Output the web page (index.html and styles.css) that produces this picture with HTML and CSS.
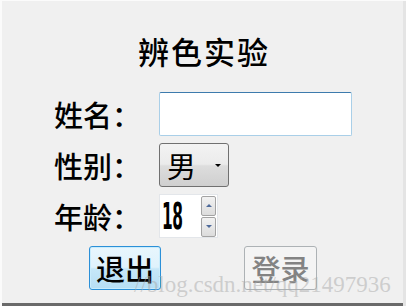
FILE: index.html
```html
<!DOCTYPE html>
<html lang="zh-CN">
<head>
<meta charset="utf-8">
<title>辨色实验</title>
<link rel="stylesheet" href="styles.css">
</head>
<body>
<div class="window">
  <h1 class="title">辨色实验</h1>
  <div class="row">
    <span class="label">姓名：</span>
    <div class="textbox"></div>
  </div>
  <div class="row">
    <span class="label">性别：</span>
    <div class="combo"><span class="combo-text">男</span><span class="combo-arrow"></span></div>
  </div>
  <div class="row">
    <span class="label">年龄：</span>
    <div class="spin">
      <span class="spin-value">18</span>
      <div class="spin-buttons">
        <div class="spin-btn"><span class="tri-up"></span></div>
        <div class="spin-btn"><span class="tri-down"></span></div>
      </div>
    </div>
  </div>
  <div class="buttons">
    <div class="btn btn-exit">退出</div>
    <div class="btn btn-login">登录</div>
  </div>
  <div class="watermark">//blog.csdn.net/qq21497936</div>
</div>
</body>
</html>
```
FILE: styles.css
```css
html, body {
  margin: 0;
  padding: 0;
  background: #f0f0f0;
}
.window {
  position: relative;
  width: 406px;
  height: 306px;
  box-sizing: border-box;
  background: #f0f0f0;
  padding-top: 31px;
  display: flex;
  flex-direction: column;
  font-family: "Noto Sans CJK SC", sans-serif;
  color: #000;
  box-shadow: inset 2px 0 0 #fbfbfb, inset 0 1px 0 #fbfbfb, inset -3px 0 0 #e4e4e4, inset 0 -3px 0 #6a6a6a;
  overflow: hidden;
}
.title {
  margin: 0;
  font-size: 31px;
  font-weight: 500;
  line-height: 40px;
  height: 40px;
  text-align: center;
  letter-spacing: 2px;
  padding-left: 2px;
}
.row {
  display: flex;
  align-items: center;
  height: 44px;
  padding-left: 54px;
  margin-top: 7px;
}
.title + .row {
  margin-top: 21px;
}
.label {
  width: 105px;
  font-size: 29px;
  line-height: 44px;
  font-weight: 500;
}
.textbox {
  width: 193px;
  height: 44px;
  box-sizing: border-box;
  background: #fff;
  border: 1px solid #a9cfe8;
  border-top-color: #3d7bad;
  border-radius: 2px;
}
.combo {
  position: relative;
  width: 70px;
  height: 44px;
  box-sizing: border-box;
  border: 1px solid #707070;
  border-radius: 3px;
  background: linear-gradient(#f3f3f3 0%, #ebebeb 48%, #dddddd 52%, #cfcfcf 100%);
  display: flex;
  align-items: center;
}
.combo-text {
  font-size: 29px;
  line-height: 44px;
  padding-left: 7px;
}
.combo-arrow {
  position: absolute;
  right: 7px;
  top: 20px;
  width: 0;
  height: 0;
  border-left: 3px solid transparent;
  border-right: 3px solid transparent;
  border-top: 3px solid #000;
}
.spin {
  width: 59px;
  height: 44px;
  box-sizing: border-box;
  background: #fff;
  border: 1px solid #e3e6ea;
  display: flex;
  align-items: center;
  justify-content: space-between;
  padding: 1px 1px 1px 0;
}
.spin-value {
  display: inline-block;
  width: 20px;
  font-family: "DejaVu Sans Condensed", "DejaVu Sans", sans-serif;
  font-weight: bold;
  font-size: 38px;
  line-height: 40px;
  transform: scaleX(0.45);
  transform-origin: left center;
  margin-left: 2px;
  letter-spacing: -1px;
}
.spin-buttons {
  display: flex;
  flex-direction: column;
  width: 15px;
  height: 41px;
  gap: 1px;
}
.spin-btn {
  flex: 1;
  box-sizing: border-box;
  border: 1px solid #a3a3a3;
  border-radius: 2px;
  background: linear-gradient(#f2f2f2, #dcdcdc);
  display: flex;
  align-items: center;
  justify-content: center;
}
.tri-up, .tri-down {
  width: 0;
  height: 0;
  border-left: 3px solid transparent;
  border-right: 3px solid transparent;
}
.tri-up { border-bottom: 3px solid #4e6a9a; }
.tri-down { border-top: 3px solid #4e6a9a; }
.buttons {
  display: flex;
  margin-top: 8px;
  padding-left: 89px;
  height: 44px;
}
.btn {
  width: 72px;
  height: 44px;
  box-sizing: border-box;
  border-radius: 3px;
  font-size: 29px;
  line-height: 42px;
  text-align: center;
  font-weight: 500;
}
.btn-exit {
  border: 1px solid #2b90d8;
  background: linear-gradient(#e8f6fd 0%, #dff2fc 48%, #c6e7f8 52%, #b6def4 100%);
  box-shadow: inset 0 0 0 1px #c9ecfc;
  color: #000;
}
.btn-login {
  margin-left: 83px;
  width: 73px;
  border: 1px solid #adb2b5;
  background: #f4f4f4;
  color: #838383;
}
.watermark {
  position: absolute;
  left: 134px;
  top: 270px;
  font-family: "Liberation Serif", serif;
  font-size: 23px;
  line-height: 30px;
  color: rgba(170, 170, 170, 0.5);
  white-space: nowrap;
  pointer-events: none;
}
```
